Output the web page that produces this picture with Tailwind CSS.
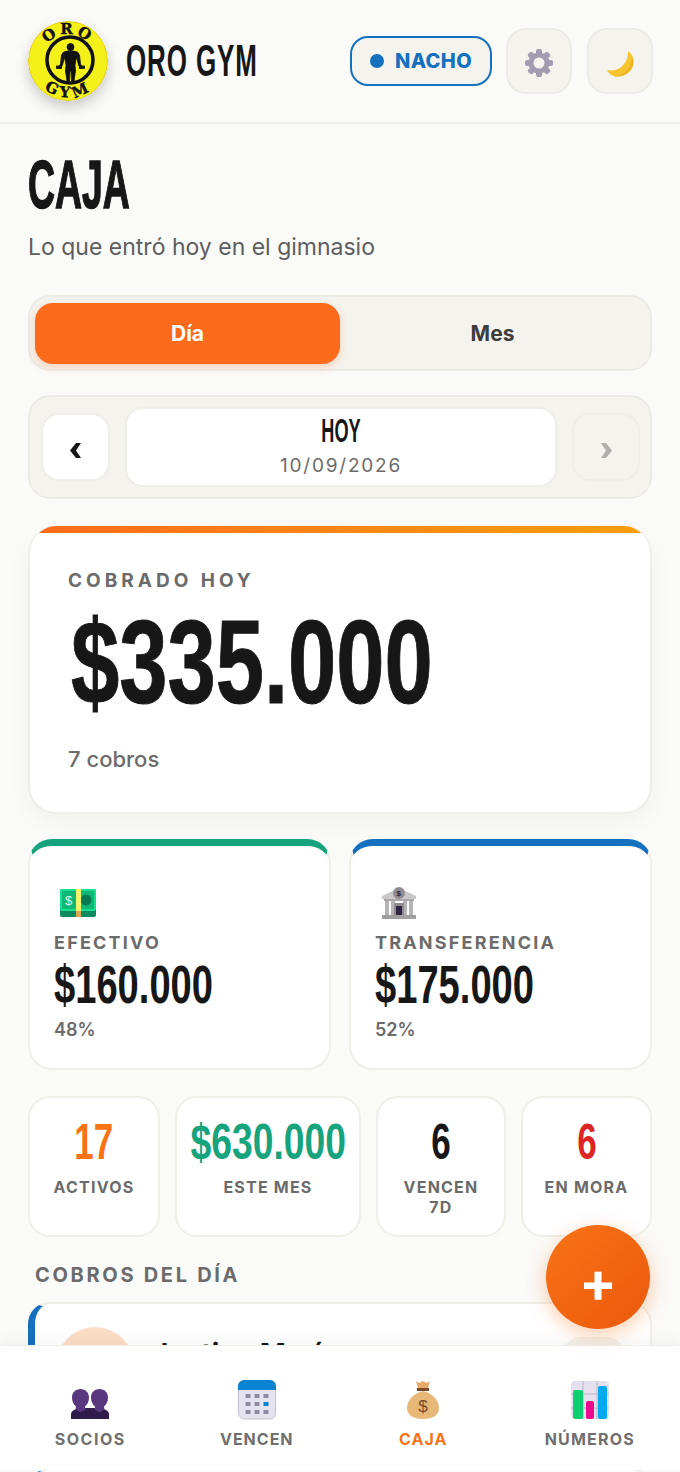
<!DOCTYPE html>
<html lang="es">
<head>
    <meta charset="UTF-8">
    <meta name="viewport" content="width=device-width, initial-scale=1.0">
    <title>Oro Gym - Caja</title>
    <script src="https://cdn.jsdelivr.net/npm/@tailwindcss/browser@4"></script>
</head>
<body class="bg-[#fafaf8] font-['Inter',sans-serif] text-[#171717]">
<div class="relative h-[1472px] w-[680px] overflow-hidden">

    <!-- Cabecera -->
    <header class="flex h-[124px] items-center border-b-2 border-[#efeee9] pl-[28px] pr-[27px]">
        <svg class="h-[80px] w-[80px] shrink-0 rounded-full shadow-[0_6px_14px_rgba(0,0,0,0.2)]" viewBox="0 0 80 80">
            <circle cx="40" cy="40" r="39.500" fill="#f4f01a" stroke="#e2c80c" stroke-width="1"/>
            <circle cx="42" cy="39" r="23" fill="none" stroke="#111" stroke-width="3.500"/>
            <g transform="translate(1.500 0)" stroke="#111" stroke-width="0.800">
                <circle cx="41" cy="26" r="3.500" fill="#111"/>
                <path fill="#111" d="M34 31Q41 28 48 31L50 34L51 43L53 46L51 48L49 44L47 36L45.500 44L46 50L44.500 60L42 60L41.500 50L40.500 50L40 60L37.500 60L36 50L36.500 44L35 36L33 44L31 48L29 46L31 43L32 34Z"/>
                <rect x="27" y="45" width="5" height="2.500" fill="#111"/>
                <rect x="50" y="45" width="5" height="2.500" fill="#111"/>
            </g>
            <defs>
                <path id="arcTop" d="M13 40a27 27 0 0 1 54 0"/>
                <path id="arcBottom" d="M4 40a36.500 36.500 0 0 0 73 0"/>
            </defs>
            <text font-family="DejaVu Serif" font-weight="700" font-size="15" fill="#111" stroke="#111" stroke-width="0.400" letter-spacing="3"><textPath href="#arcTop" startOffset="50%" text-anchor="middle">ORO</textPath></text>
            <text font-family="DejaVu Serif" font-weight="700" font-size="15" fill="#111" stroke="#111" stroke-width="0.400" letter-spacing="4"><textPath href="#arcBottom" startOffset="50%" text-anchor="middle">GYM</textPath></text>
        </svg>
        <div class="ml-[18px] w-[131px] origin-left scale-x-[0.59] whitespace-nowrap font-['Liberation_Sans',sans-serif] text-[44px] font-bold leading-none tracking-[1.5px]">ORO GYM</div>

        <div class="ml-auto flex h-[50px] w-[142px] items-center gap-[11px] rounded-[18px] border-2 border-[#1570bd] bg-[#f4f3ee] pl-[18px] text-[#1570bd]">
            <span class="h-[14px] w-[14px] rounded-full bg-[#1570bd]"></span>
            <span class="text-[20px] font-extrabold tracking-[0.4px]">NACHO</span>
        </div>
        <div class="ml-[14px] flex h-[66px] w-[66px] items-center justify-center rounded-[20px] border-2 border-[#ecebe6] bg-[#f4f3ee]">
            <svg class="mt-[3px] h-[28px] w-[28px]" viewBox="0 0 28 28">
                <g fill="#a29cb0">
                    <circle cx="14" cy="14" r="10.500"/>
                    <rect x="11" y="0" width="6" height="6" rx="2"/>
                    <rect x="11" y="22" width="6" height="6" rx="2"/>
                    <rect x="0" y="11" width="6" height="6" rx="2"/>
                    <rect x="22" y="11" width="6" height="6" rx="2"/>
                    <rect x="11" y="0" width="6" height="6" rx="2" transform="rotate(45 14 14)"/>
                    <rect x="11" y="22" width="6" height="6" rx="2" transform="rotate(45 14 14)"/>
                    <rect x="0" y="11" width="6" height="6" rx="2" transform="rotate(45 14 14)"/>
                    <rect x="22" y="11" width="6" height="6" rx="2" transform="rotate(45 14 14)"/>
                </g>
                <circle cx="14" cy="14" r="5.500" fill="#f4f3ee"/>
            </svg>
        </div>
        <div class="ml-[15px] flex h-[66px] w-[66px] items-center justify-center rounded-[20px] border-2 border-[#ecebe6] bg-[#f4f3ee]">
            <svg class="mt-[5px] h-[28px] w-[28px]" viewBox="0 0 28 28">
                <path fill="#f7c52e" d="M22 1C27.500 5 29 11 26.500 17C23.500 24 15 28 8 26C5 25 2.500 23.500 1 20C5 21 10 20.500 14 18C19 14.500 22.500 8 22 1z"/>
                <path fill="#eeb424" d="M25.500 6C27.500 10 28 13.500 26.500 17C23.500 24 15 28 8 26C14 25.500 20 22.500 23 17C25 13.500 25.800 10 25.500 6z"/>
            </svg>
        </div>
    </header>

    <main class="px-[28px]">
        <h1 class="mt-[28px] origin-left scale-x-[0.55] whitespace-nowrap font-['Liberation_Sans',sans-serif] text-[68px] font-bold leading-[64px] [-webkit-text-stroke:1.5px_#171717]">CAJA</h1>
        <p class="mt-[16px] text-[23px] leading-[30px] text-[#5e5e5e]">Lo que entró hoy en el gimnasio</p>

        <!-- Selector día / mes -->
        <div class="mt-[33px] flex h-[76px] rounded-[22px] border-2 border-[#ecebe6] bg-[#f4f3ee] pb-[5px] pl-[5px] pr-[5px] pt-[6px]">
            <div class="flex w-[305px] items-center justify-center rounded-[18px] bg-[#fc6a1b] text-[21px] font-bold text-white shadow-[0_3px_8px_rgba(252,106,27,0.25)]">Día</div>
            <div class="flex flex-1 items-center justify-center text-[21px] font-bold text-[#3d3d3d]">Mes</div>
        </div>

        <!-- Navegación de fecha -->
        <div class="mt-[24px] flex h-[104px] items-center gap-[15px] rounded-[22px] border-2 border-[#ecebe6] bg-[#f4f3ee] pl-[11px] pr-[10px]">
            <div class="flex h-[68px] w-[69px] shrink-0 items-center justify-center rounded-[18px] border-2 border-[#efeee9] bg-white pt-[6px]">
                <svg class="h-[15px] w-[11px]" viewBox="0 0 11 15"><path fill="#171717" d="M6 0h5L6 7.500 11 15H6L0 7.500z"/></svg>
            </div>
            <div class="flex h-[80px] flex-1 flex-col items-center justify-center rounded-[18px] border-2 border-[#efeee9] bg-white pb-[1px]">
                <div class="w-full origin-center scale-x-[0.55] text-center font-['Liberation_Sans',sans-serif] text-[33px] font-bold leading-[34px]">HOY</div>
                <div class="mt-[5px] text-[19px] leading-[26px] tracking-[1.8px] text-[#6b6b6b]">10/09/2026</div>
            </div>
            <div class="flex h-[68px] w-[68px] shrink-0 items-center justify-center rounded-[18px] border-2 border-[#efeee9] bg-[#f4f3ee] pt-[6px]">
                <svg class="h-[15px] w-[11px]" viewBox="0 0 11 15"><path fill="#b0afab" d="M5 0H0l5 7.500L0 15h5l6-7.500z"/></svg>
            </div>
        </div>

        <!-- Total -->
        <section class="mt-[27px] h-[288px] overflow-hidden rounded-[28px] border-2 border-t-0 border-[#efeee9] bg-white shadow-[0_8px_24px_rgba(0,0,0,0.04)]">
            <div class="h-[7px] bg-linear-to-r from-[#fc6a1b] to-[#f59e0b]"></div>
            <div class="pl-[38px] pt-[36px]">
                <div class="text-[19px] font-bold leading-[24px] tracking-[4px] text-[#6b6b6b]">COBRADO HOY</div>
                <div class="ml-[3px] mt-[10px] origin-left scale-x-[0.735] whitespace-nowrap font-['Liberation_Sans',sans-serif] text-[118px] font-bold leading-[118px] [-webkit-text-stroke:1px_#171717]">$335.000</div>
                <div class="mt-[24px] text-[22px] font-medium leading-[28px] text-[#6b6b6b]">7 cobros</div>
            </div>
        </section>

        <!-- Efectivo / transferencia -->
        <div class="mt-[25px] grid grid-cols-2 gap-[18px]">
            <section class="h-[231px] rounded-[24px] border-2 border-t-[7px] border-[#efeee9] border-t-[#17a37c] bg-white pl-[24px] pt-[43px]">
                <svg class="ml-[6px] h-[28px] w-[36px]" viewBox="0 0 36 28">
                    <rect x="0" y="0" width="36" height="28" rx="2" fill="#0b8a5f"/>
                    <rect x="0" y="0" width="36" height="22" rx="2" fill="#15e08f"/>
                    <rect x="2" y="2" width="32" height="18" fill="#0fb877"/>
                    <circle cx="26" cy="11" r="5.500" fill="#0a7a52"/>
                    <rect x="16" y="0" width="5" height="22" fill="#f3f56a"/>
                    <rect x="16" y="22" width="5" height="6" fill="#d8a94f"/>
                    <text x="5" y="16" font-family="Liberation Sans" font-size="13" fill="#d8fbe9">$</text>
                </svg>
                <div class="mt-[14px] text-[18px] font-bold leading-[24px] tracking-[2.2px] text-[#6b6b6b]">EFECTIVO</div>
                <div class="mt-[4px] origin-left scale-x-[0.706] whitespace-nowrap font-['Liberation_Sans',sans-serif] text-[54px] font-bold leading-[50px]">$160.000</div>
                <div class="mt-[9px] text-[18px] font-semibold leading-[24px] text-[#6b6b6b]">48%</div>
            </section>
            <section class="h-[231px] rounded-[24px] border-2 border-t-[7px] border-[#efeee9] border-t-[#1570bd] bg-white pl-[24px] pt-[43px]">
                <svg class="ml-[6px] h-[34px] w-[36px] -mb-[3px] -mt-[3px]" viewBox="0 0 36 34">
                    <path fill="#c9c7c7" d="M18 2 35 10v3H1v-3z"/>
                    <circle cx="18" cy="7" r="6" fill="#8e8b93"/>
                    <text x="15.500" y="10" font-family="Liberation Sans" font-size="8" font-weight="700" fill="#2c2538">$</text>
                    <rect x="3" y="13" width="30" height="2" fill="#a8a6a6"/>
                    <rect x="4" y="15" width="4" height="14" fill="#b5b3b3"/>
                    <rect x="10" y="15" width="4" height="14" fill="#b5b3b3"/>
                    <rect x="22" y="15" width="4" height="14" fill="#b5b3b3"/>
                    <rect x="28" y="15" width="4" height="14" fill="#b5b3b3"/>
                    <rect x="13" y="17" width="10" height="12" fill="#8e8b93"/>
                    <rect x="15" y="20" width="6" height="9" fill="#2f2540"/>
                    <rect x="1" y="29" width="34" height="4" fill="#a09e9e"/>
                </svg>
                <div class="mt-[14px] text-[18px] font-bold leading-[24px] tracking-[2.2px] text-[#6b6b6b]">TRANSFERENCIA</div>
                <div class="mt-[4px] origin-left scale-x-[0.706] whitespace-nowrap font-['Liberation_Sans',sans-serif] text-[54px] font-bold leading-[50px]">$175.000</div>
                <div class="mt-[9px] text-[18px] font-semibold leading-[24px] text-[#6b6b6b]">52%</div>
            </section>
        </div>

        <!-- Indicadores -->
        <div class="mt-[26px] flex h-[141px] gap-[15px]">
            <div class="flex w-[132px] flex-col items-center rounded-[22px] border-2 border-[#efeee9] bg-white pt-[19px]">
                <div class="origin-center scale-x-[0.7] font-['Liberation_Sans',sans-serif] text-[50px] font-bold leading-[50px] text-[#f97316]">17</div>
                <div class="mt-[10px] text-[16px] font-bold leading-[20px] tracking-[1.2px] text-[#6b6b6b]">ACTIVOS</div>
            </div>
            <div class="flex w-[186px] flex-col items-center rounded-[22px] border-2 border-[#efeee9] bg-white pt-[19px]">
                <div class="w-[208px] shrink-0 origin-center scale-x-[0.745] whitespace-nowrap text-center font-['Liberation_Sans',sans-serif] text-[50px] font-bold leading-[50px] text-[#17a37c]">$630.000</div>
                <div class="mt-[10px] text-[16px] font-bold leading-[20px] tracking-[1.2px] text-[#6b6b6b]">ESTE MES</div>
            </div>
            <div class="flex w-[130px] flex-col items-center rounded-[22px] border-2 border-[#efeee9] bg-white pt-[19px]">
                <div class="origin-center scale-x-[0.7] font-['Liberation_Sans',sans-serif] text-[50px] font-bold leading-[50px]">6</div>
                <div class="mt-[10px] text-center text-[16px] font-bold leading-[20px] tracking-[1.2px] text-[#6b6b6b]">VENCEN<br>7D</div>
            </div>
            <div class="flex w-[131px] flex-col items-center rounded-[22px] border-2 border-[#efeee9] bg-white pt-[19px]">
                <div class="origin-center scale-x-[0.7] font-['Liberation_Sans',sans-serif] text-[50px] font-bold leading-[50px] text-[#dc2626]">6</div>
                <div class="mt-[10px] text-[16px] font-bold leading-[20px] tracking-[1.2px] text-[#6b6b6b]">EN MORA</div>
            </div>
        </div>

        <div class="mt-[25px] pl-[7px] text-[20px] font-bold leading-[26px] tracking-[2.7px] text-[#6b6b6b]">COBROS DEL DÍA</div>

        <!-- Cobros, tapados por la barra inferior -->
        <div class="mt-[14px] flex h-[154px] items-start rounded-[22px] border-2 border-l-[7px] border-[#efeee9] border-l-[#1570bd] bg-white pl-[21px] pr-[25px] pt-[23px]">
            <div class="h-[78px] w-[78px] rounded-full bg-[#fbdcc5]"></div>
            <div class="ml-[18px] mt-[10px] text-[28px] font-bold leading-[34px]">Justina María</div>
            <div class="ml-auto mt-[10px] h-[60px] w-[62px] rounded-[18px] bg-[#f4f3ee]"></div>
        </div>
        <div class="mt-[12px] h-[100px] rounded-[22px] border-2 border-l-[7px] border-[#efeee9] border-l-[#1570bd] bg-white"></div>
    </main>

    <!-- Botón flotante -->
    <div class="absolute left-[546px] top-[1225px] z-20 flex h-[104px] w-[104px] items-center justify-center rounded-full bg-linear-to-br from-[#f97316] to-[#ea580c] pt-[10px] text-[56px] font-bold leading-none text-white shadow-[0_6px_20px_rgba(249,115,22,0.35)]">+</div>

    <!-- Barra inferior -->
    <nav class="absolute inset-x-0 bottom-[2px] z-10 grid h-[125px] grid-cols-4 border-t border-[#efeee9] bg-white px-[7px] shadow-[0_-4px_16px_rgba(0,0,0,0.04)]">
        <div class="flex flex-col items-center pt-[34px]">
            <svg class="h-[40px] w-[38px]" viewBox="0 0 38 40">
                <path fill="#2f1c4a" d="M0 39v-5c0-3 4-5 9-6h20c5 1 9 3 9 6v5z"/>
                <path fill="#5a3880" d="M9.500 9c5 0 8.500 3.500 8.500 8.500 0 4-1.500 7-4 9l.5 3-5 3-5-3 .5-3c-2.500-2-4-5-4-9C1 12.500 4.500 9 9.500 9z"/>
                <path fill="#5a3880" d="M28.500 9c5 0 8.500 3.500 8.500 8.500 0 4-1.500 7-4 9l.5 3-5 3-5-3 .5-3c-2.500-2-4-5-4-9C20 12.500 23.500 9 28.500 9z"/>
            </svg>
            <span class="mt-[8px] text-[16px] font-bold leading-[22px] tracking-[1.5px] text-[#6f6f6f]">SOCIOS</span>
        </div>
        <div class="flex flex-col items-center pt-[34px]">
            <svg class="h-[40px] w-[38px]" viewBox="0 0 38 40">
                <rect x="0.500" y="0.500" width="37" height="38.500" rx="6" fill="#e6e3f0" stroke="#c4c0d0" stroke-width="1"/>
                <path fill="#0a84d0" d="M0 10V6a6 6 0 0 1 6-6h26a6 6 0 0 1 6 6v4z"/>
                <g fill="#8f8a9e">
                    <rect x="7.500" y="14" width="5" height="4"/><rect x="16.500" y="14" width="5" height="4"/><rect x="25.500" y="14" width="5" height="4"/>
                    <rect x="7.500" y="22" width="5" height="4"/><rect x="16.500" y="22" width="5" height="4"/>
                    <rect x="7.500" y="30" width="5" height="4"/><rect x="16.500" y="30" width="5" height="4"/><rect x="25.500" y="30" width="5" height="4"/>
                </g>
                <rect x="25.500" y="22" width="5" height="4" fill="#0a84d0"/>
            </svg>
            <span class="mt-[8px] text-[16px] font-bold leading-[22px] tracking-[1px] text-[#6f6f6f]">VENCEN</span>
        </div>
        <div class="flex flex-col items-center pt-[34px]">
            <svg class="h-[40px] w-[32px]" viewBox="0 0 32 38">
                <path fill="#e8b878" d="M16 10C7 12 0 19 0 27c0 7 6 11 16 11s16-4 16-11c0-8-7-15-16-17z"/>
                <path fill="#e8a868" d="M9 0l3 2 4-2 4 2 3-2-2 7H11z"/>
                <rect x="10" y="7" width="12" height="3" fill="#7a4a2a"/>
                <text x="16" y="31" text-anchor="middle" font-family="Liberation Sans" font-size="17" fill="#7a4a2a">$</text>
            </svg>
            <span class="mt-[8px] text-[16px] font-bold leading-[22px] tracking-[1px] text-[#f97316]">CAJA</span>
        </div>
        <div class="flex flex-col items-center pt-[34px]">
            <svg class="h-[40px] w-[38px]" viewBox="0 0 38 38">
                <rect width="38" height="38" rx="4" fill="#e4e0ee"/>
                <path stroke="#b9b5c4" stroke-width="1" d="M12 0v38M26 0v38M0 13h38M0 27h38"/>
                <rect x="2" y="9" width="10" height="29" rx="2" fill="#0ccf72"/>
                <rect x="15" y="20" width="8" height="18" rx="2" fill="#ee0a8c"/>
                <rect x="27" y="5" width="9" height="33" rx="2" fill="#05a9ef"/>
            </svg>
            <span class="mt-[8px] text-[16px] font-bold leading-[22px] tracking-[1.2px] text-[#6f6f6f]">NÚMEROS</span>
        </div>
    </nav>
</div>
</body>
</html>
